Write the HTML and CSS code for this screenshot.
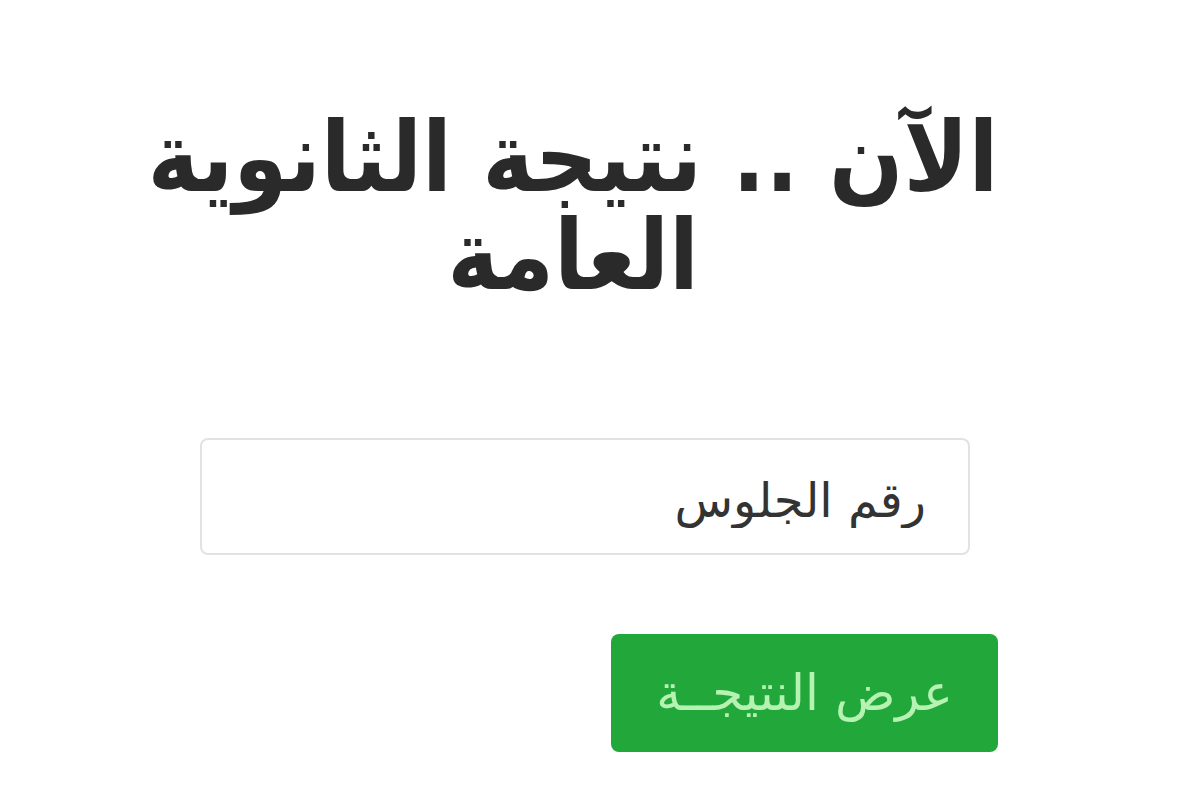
FILE: index.html
```html
<!DOCTYPE html>
<html lang="ar" dir="rtl">
<head>
<meta charset="utf-8">
<title>نتيجة الثانوية العامة</title>
<link rel="stylesheet" href="styles.css">
</head>
<body>
<main class="page">
  <h1 class="title">الآن .. نتيجة الثانوية<br>العامة</h1>
  <form class="form">
    <input class="field" type="text" placeholder="رقم الجلوس">
    <button class="submit" type="button">عرض النتيجــة</button>
  </form>
</main>
</body>
</html>
```
FILE: styles.css
```css
html, body {
  margin: 0;
  padding: 0;
  background: #ffffff;
}
.page {
  width: 1200px;
  height: 800px;
  display: flex;
  flex-direction: column;
  align-items: flex-start;
  font-family: "DejaVu Sans", sans-serif;
}
.title {
  box-sizing: border-box;
  margin: 109px 0 0 0;
  width: 1200px;
  padding: 0 54px 0 0;
  text-align: center;
  font-family: "DejaVu Sans Condensed", "DejaVu Sans", sans-serif;
  font-size: 97px;
  line-height: 98px;
  font-weight: bold;
  color: #2a2a2a;
  white-space: nowrap;
}
.form {
  display: flex;
  flex-direction: column;
  align-items: flex-start;
  margin-top: 133px;
}
.field {
  box-sizing: border-box;
  margin-right: 230px;
  width: 770px;
  height: 117px;
  border: 2px solid #e2e2e2;
  border-radius: 8px;
  padding: 6px 42px 0;
  font-family: "DejaVu Sans", sans-serif;
  font-size: 48px;
  color: #333333;
  background: #ffffff;
  outline: none;
}
.field::placeholder {
  color: #333333;
}
.submit {
  box-sizing: border-box;
  margin-top: 79px;
  margin-right: 202px;
  width: 387px;
  height: 118px;
  border: none;
  border-radius: 8px;
  background: #22a83a;
  color: #b6f2b2;
  font-family: "DejaVu Sans", sans-serif;
  font-size: 50px;
  cursor: pointer;
}
```
